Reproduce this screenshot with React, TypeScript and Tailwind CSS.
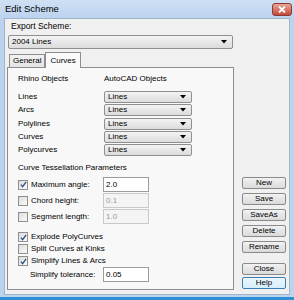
import type { ReactNode } from "react";

const font = { fontFamily: '"Liberation Sans", Arial, sans-serif' };

function Combo({ value, className = "" }: { value: string; className?: string }) {
    return (
        <div
            className={`flex items-center justify-between rounded-[2px] border border-[#8e8f8f] bg-gradient-to-b from-[#f3f3f3] to-[#dcdcdc] pl-[3px] pr-[5px] ${className}`}
        >
            <span className="text-[8px] leading-none text-black">{value}</span>
            <svg width="6" height="4" viewBox="0 0 6 4" className="text-black">
                <path d="M0 0h6L3 3.5z" fill="currentColor" />
            </svg>
        </div>
    );
}

function Check({ checked, children }: { checked?: boolean; children: ReactNode }) {
    return (
        <div className="flex items-center gap-[3px] whitespace-nowrap">
            <span className="flex h-[10px] w-[10px] items-center justify-center border border-[#8f8f8f] bg-gradient-to-br from-[#dcdcdc] to-[#fbfbfb]">
                {checked && (
                    <svg width="7" height="7" viewBox="0 0 8 8">
                        <path d="M1 4.2l2 2.3L7 1" fill="none" stroke="#2e4e8a" strokeWidth="1.5" />
                    </svg>
                )}
            </span>
            <span className="text-[8px] leading-none text-black">{children}</span>
        </div>
    );
}

function Field({ value, disabled }: { value: string; disabled?: boolean }) {
    return (
        <div
            className={`flex h-[15px] w-[46px] items-center border px-[2px] text-[8px] leading-none ${
                disabled ? "border-[#c9c9c9] bg-[#f4f4f4] text-[#9a9a9a]" : "border-[#9c9c9c] bg-white text-black"
            }`}
        >
            {value}
        </div>
    );
}

function Btn({ label, primary }: { label: string; primary?: boolean }) {
    return (
        <div
            className={`flex h-[12px] w-[44px] items-center justify-center rounded-[2px] border text-[8px] leading-none text-black ${
                primary
                    ? "border-[#3c7fb1] bg-gradient-to-b from-[#eaf6fd] to-[#d7eefb]"
                    : "border-[#8a8a8a] bg-gradient-to-b from-[#f2f2f2] to-[#dadada]"
            }`}
        >
            {label}
        </div>
    );
}

const mappings = ["Lines", "Arcs", "Polylines", "Curves", "Polycurves"];

export default function App() {
    return (
        <div style={font} className="flex h-[300px] w-[294px] flex-col overflow-hidden bg-[#bcd3ee]">
            {/* title bar */}
            <div className="flex h-[18px] shrink-0 items-center justify-between bg-gradient-to-b from-[#cfe0f3] to-[#bcd3ee] pl-[5px] pr-[2px]">
                <span className="text-[9.5px] leading-none text-black">Edit Scheme</span>
                <div className="flex h-[13px] w-[20px] items-center justify-center rounded-[3px] border border-[#8a3a32] bg-gradient-to-b from-[#e8a597] to-[#c4453a]">
                    <svg width="8" height="7" viewBox="0 0 8 7">
                        <path d="M1 0.5l6 6M7 0.5l-6 6" stroke="white" strokeWidth="1.8" />
                    </svg>
                </div>
            </div>

            {/* body */}
            <div className="mx-[4px] flex h-[277px] shrink-0 border border-[#a0b4cc] bg-[#f0f0f0] pl-[2px] pr-[2px]">
                <div className="flex w-[227px] flex-col">
                    <div className="mt-[1px] pl-[4px] text-[8.5px] leading-[12px] text-black">Export Scheme:</div>
                    <Combo value="2004 Lines" className="mt-[3px] ml-[1px] h-[14px] w-[225px]" />

                    {/* tabs */}
                    <div className="mt-[3px] flex h-[15px] items-end pl-[2px]">
                        <div className="flex h-[13px] items-center border border-b-0 border-[#8c8e94] bg-gradient-to-b from-[#f2f2f2] to-[#e3e3e3] px-[3px] text-[8px] leading-none">
                            General
                        </div>
                        <div className="relative -mb-px flex h-[16px] items-center border border-b-0 border-[#8c8e94] bg-[#fafafa] px-[4px] text-[8px] leading-none">
                            Curves
                        </div>
                    </div>

                    {/* panel */}
                    <div className="flex h-[223px] flex-col border border-[#8c8e94] bg-[#f8f8f8] pl-[10px]">
                        <div className="mt-[5px] flex text-[8px] leading-[12px]">
                            <span className="w-[86px]">Rhino Objects</span>
                            <span>AutoCAD Objects</span>
                        </div>
                        <div className="mt-[6px] flex flex-col gap-[1.3px]">
                            {mappings.map((m) => (
                                <div key={m} className="flex items-center">
                                    <span className="w-[86px] text-[8px] leading-none">{m}</span>
                                    <Combo value="Lines" className="h-[12px] w-[88px]" />
                                </div>
                            ))}
                        </div>

                        <div className="mt-[6px] text-[8px] leading-[12px]">Curve Tessellation Parameters</div>
                        <div className="mt-[3px] flex flex-col gap-[1px]">
                            <div className="flex items-center">
                                <div className="w-[85px]">
                                    <Check checked>Maximum angle:</Check>
                                </div>
                                <Field value="2.0" />
                            </div>
                            <div className="flex items-center">
                                <div className="w-[85px]">
                                    <Check>Chord height:</Check>
                                </div>
                                <Field value="0.1" disabled />
                            </div>
                            <div className="flex items-center">
                                <div className="w-[85px]">
                                    <Check>Segment length:</Check>
                                </div>
                                <Field value="1.0" disabled />
                            </div>
                        </div>

                        <div className="mt-[8px] flex flex-col gap-[2px]">
                            <Check checked>Explode PolyCurves</Check>
                            <Check>Split Curves at Kinks</Check>
                            <Check checked>Simplify Lines &amp; Arcs</Check>
                        </div>
                        <div className="mt-[1px] flex items-center">
                            <span className="w-[85px] whitespace-nowrap pl-[12px] text-[8px] leading-none">Simplify tolerance:</span>
                            <Field value="0.05" />
                        </div>
                    </div>
                </div>

                {/* buttons */}
                <div className="ml-auto flex flex-col justify-end pb-[5px] pr-[1px]">
                    <div className="flex flex-col gap-[4px]">
                        <Btn label="New" />
                        <Btn label="Save" />
                        <Btn label="SaveAs" />
                        <Btn label="Delete" />
                        <Btn label="Rename" />
                    </div>
                    <div className="mt-[10px] flex flex-col gap-[2px]">
                        <Btn label="Close" />
                        <Btn label="Help" primary />
                    </div>
                </div>
            </div>
            <div className="mt-auto h-[3px] shrink-0 bg-[#2f8fd4]" />
        </div>
    );
}
